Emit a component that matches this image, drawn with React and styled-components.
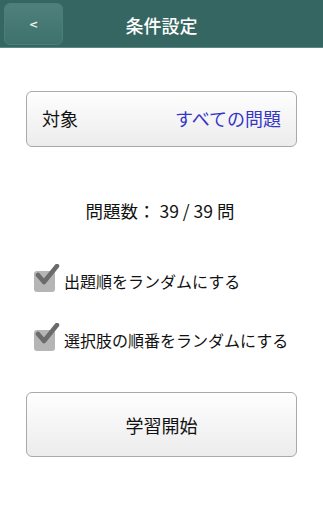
import React, { useState } from 'react'
import styled, { createGlobalStyle } from 'styled-components'

const GlobalStyle = createGlobalStyle`
    html, body {
        margin: 0;
        padding: 0;
        background: #fff;
        font-family: "Noto Sans CJK JP", "Noto Sans", sans-serif;
    }
`

function CheckRow({ label, checked, onToggle }) {
    return (
        <Option onClick={onToggle}>
            <Box>
                {checked && (
                    <svg width="26" height="24" viewBox="0 0 26 24">
                        <path d="M4 11 L10 18 L23 2" fill="none" stroke="#6b6b6b" strokeWidth="4.5" strokeLinecap="round" strokeLinejoin="round" />
                    </svg>
                )}
            </Box>
            <OptionLabel>{label}</OptionLabel>
        </Option>
    )
}

function App() {
    const [order, setOrder] = useState(true)
    const [choices, setChoices] = useState(true)

    return (
        <>
            <GlobalStyle />
            <Page>
                <Header>
                    <BackButton>&lt;</BackButton>
                    <Title>条件設定</Title>
                </Header>
                <Content>
                    <TargetButton>
                        <span>対象</span>
                        <TargetValue>すべての問題</TargetValue>
                    </TargetButton>
                    <Count>問題数： 39 / 39 問</Count>
                    <Options>
                        <CheckRow label="出題順をランダムにする" checked={order} onToggle={() => setOrder(!order)} />
                        <CheckRow label="選択肢の順番をランダムにする" checked={choices} onToggle={() => setChoices(!choices)} />
                    </Options>
                    <StartButton>学習開始</StartButton>
                </Content>
            </Page>
        </>
    )
}

export default App

const Page = styled.div`
    width: 323px;
    min-height: 512px;
    background: #fff;
`

const Header = styled.div`
    position: relative;
    height: 47px;
    background: #356662;
    border-bottom: 1px solid #5b8985;
    display: flex;
    align-items: center;
    justify-content: center;
`

const BackButton = styled.button`
    position: absolute;
    left: 4px;
    top: 3px;
    width: 59px;
    height: 42px;
    border-radius: 6px;
    border: 1px solid #4c7d78;
    background: linear-gradient(#4f807b, #3f716c);
    color: #e8f2f0;
    font-family: "DejaVu Sans", sans-serif;
    font-size: 11px;
    font-weight: bold;
    padding: 0;
`

const Title = styled.div`
    color: #fff;
    font-size: 18px;
    font-weight: 500;
    padding-top: 2px;
`

const Content = styled.div`
    padding: 43px 26px 0 26px;
    display: flex;
    flex-direction: column;
`

const RoundButton = styled.button`
    width: 271px;
    border: 1px solid #a9a9a9;
    border-radius: 6px;
    background: linear-gradient(#fefefe, #ececec);
    font-family: "Noto Sans CJK JP", sans-serif;
    color: #111;
    font-size: 18px;
    padding: 0;
`

const TargetButton = styled(RoundButton)`
    height: 56px;
    display: flex;
    align-items: center;
    justify-content: space-between;
    padding: 0 15px 2px 15px;
`

const TargetValue = styled.span`
    color: #3535c8;
`

const Count = styled.div`
    margin-top: 51px;
    text-align: center;
    font-size: 17.5px;
    color: #111;
    padding-right: 3px;
`

const Options = styled.div`
    margin-top: 46px;
    display: flex;
    flex-direction: column;
    gap: 35px;
`

const Option = styled.div`
    display: flex;
    align-items: center;
    padding-left: 8px;
    cursor: pointer;
`

const Box = styled.div`
    position: relative;
    width: 21px;
    height: 21px;
    border-radius: 3px;
    background: #b5b5b5;
    margin-right: 9px;
    svg {
        position: absolute;
        left: 0;
        top: -7px;
    }
`

const OptionLabel = styled.span`
    font-size: 16px;
    color: #111;
`

const StartButton = styled(RoundButton)`
    margin-top: 40px;
    height: 65px;
`
